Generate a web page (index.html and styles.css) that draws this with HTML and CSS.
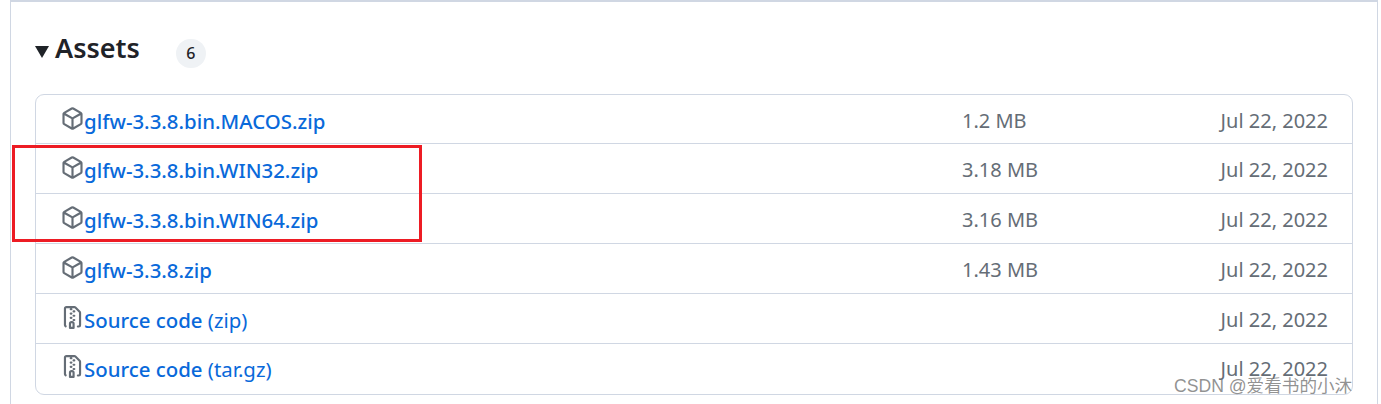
FILE: index.html
```html
<!DOCTYPE html>
<html lang="en">
<head>
    <meta charset="UTF-8">
    <title>Assets</title>
    <link rel="stylesheet" href="styles.css">
</head>
<body>
    <div class="release">
        <div class="assets-head">
            <span class="caret"></span>
            <h2 class="assets-title">Assets</h2>
            <span class="counter">6</span>
        </div>
        <ul class="assets">
            <li class="asset">
                <svg class="icon" viewBox="0 0 16 16"><path d="m8.878.392 5.25 3.045c.54.314.872.89.872 1.514v6.098a1.75 1.75 0 0 1-.872 1.514l-5.25 3.045a1.75 1.75 0 0 1-1.756 0l-5.25-3.045A1.75 1.75 0 0 1 1 11.049V4.951c0-.624.332-1.201.872-1.514L7.122.392a1.75 1.75 0 0 1 1.756 0ZM7.875 1.69l-4.63 2.685L8 7.133l4.755-2.758-4.63-2.685a.248.248 0 0 0-.25 0ZM2.5 5.677v5.372c0 .09.047.171.125.216l4.625 2.683V8.432Zm6.25 8.271 4.625-2.683a.25.25 0 0 0 .125-.216V5.677L8.75 8.432Z"/></svg>
                <a class="asset-name" href="#">glfw-3.3.8.bin.MACOS.zip</a>
                <span class="asset-size">1.2 MB</span>
                <span class="asset-date">Jul 22, 2022</span>
            </li>
            <li class="asset">
                <svg class="icon" viewBox="0 0 16 16"><path d="m8.878.392 5.25 3.045c.54.314.872.89.872 1.514v6.098a1.75 1.75 0 0 1-.872 1.514l-5.25 3.045a1.75 1.75 0 0 1-1.756 0l-5.25-3.045A1.75 1.75 0 0 1 1 11.049V4.951c0-.624.332-1.201.872-1.514L7.122.392a1.75 1.75 0 0 1 1.756 0ZM7.875 1.69l-4.63 2.685L8 7.133l4.755-2.758-4.63-2.685a.248.248 0 0 0-.25 0ZM2.5 5.677v5.372c0 .09.047.171.125.216l4.625 2.683V8.432Zm6.25 8.271 4.625-2.683a.25.25 0 0 0 .125-.216V5.677L8.75 8.432Z"/></svg>
                <a class="asset-name" href="#">glfw-3.3.8.bin.WIN32.zip</a>
                <span class="asset-size">3.18 MB</span>
                <span class="asset-date">Jul 22, 2022</span>
            </li>
            <li class="asset">
                <svg class="icon" viewBox="0 0 16 16"><path d="m8.878.392 5.25 3.045c.54.314.872.89.872 1.514v6.098a1.75 1.75 0 0 1-.872 1.514l-5.25 3.045a1.75 1.75 0 0 1-1.756 0l-5.25-3.045A1.75 1.75 0 0 1 1 11.049V4.951c0-.624.332-1.201.872-1.514L7.122.392a1.75 1.75 0 0 1 1.756 0ZM7.875 1.69l-4.63 2.685L8 7.133l4.755-2.758-4.63-2.685a.248.248 0 0 0-.25 0ZM2.5 5.677v5.372c0 .09.047.171.125.216l4.625 2.683V8.432Zm6.25 8.271 4.625-2.683a.25.25 0 0 0 .125-.216V5.677L8.75 8.432Z"/></svg>
                <a class="asset-name" href="#">glfw-3.3.8.bin.WIN64.zip</a>
                <span class="asset-size">3.16 MB</span>
                <span class="asset-date">Jul 22, 2022</span>
            </li>
            <li class="asset">
                <svg class="icon" viewBox="0 0 16 16"><path d="m8.878.392 5.25 3.045c.54.314.872.89.872 1.514v6.098a1.75 1.75 0 0 1-.872 1.514l-5.25 3.045a1.75 1.75 0 0 1-1.756 0l-5.25-3.045A1.75 1.75 0 0 1 1 11.049V4.951c0-.624.332-1.201.872-1.514L7.122.392a1.75 1.75 0 0 1 1.756 0ZM7.875 1.69l-4.63 2.685L8 7.133l4.755-2.758-4.63-2.685a.248.248 0 0 0-.25 0ZM2.5 5.677v5.372c0 .09.047.171.125.216l4.625 2.683V8.432Zm6.25 8.271 4.625-2.683a.25.25 0 0 0 .125-.216V5.677L8.75 8.432Z"/></svg>
                <a class="asset-name" href="#">glfw-3.3.8.zip</a>
                <span class="asset-size">1.43 MB</span>
                <span class="asset-date">Jul 22, 2022</span>
            </li>
            <li class="asset">
                <svg class="icon" viewBox="0 0 16 16"><path d="M3.5 1.75v11.5c0 .09.048.173.126.217a.75.75 0 0 1-.752 1.298A1.748 1.748 0 0 1 2 13.25V1.75C2 .784 2.784 0 3.75 0h5.586c.464 0 .909.185 1.237.513l2.914 2.914c.329.328.513.773.513 1.237v8.586A1.75 1.75 0 0 1 12.25 15h-.5a.75.75 0 0 1 0-1.5h.5a.25.25 0 0 0 .25-.25V4.664a.25.25 0 0 0-.073-.177L9.513 1.573a.25.25 0 0 0-.177-.073H7.25a.75.75 0 0 1 0 1.5h-.5a.75.75 0 0 1 0-1.5h-3a.25.25 0 0 0-.25.25Zm3.75 8.75h.5c.966 0 1.75.784 1.75 1.75v3a.75.75 0 0 1-.75.75h-2.5a.75.75 0 0 1-.75-.75v-3c0-.966.784-1.75 1.75-1.75ZM6 5.25a.75.75 0 0 1 .75-.75h.5a.75.75 0 0 1 0 1.5h-.5A.75.75 0 0 1 6 5.25Zm.75 2.25h.5a.75.75 0 0 1 0 1.5h-.5a.75.75 0 0 1 0-1.5ZM8 6.75A.75.75 0 0 1 8.75 6h.5a.75.75 0 0 1 0 1.5h-.5A.75.75 0 0 1 8 6.75ZM8.75 3h.5a.75.75 0 0 1 0 1.5h-.5a.75.75 0 0 1 0-1.5ZM8 9.75A.75.75 0 0 1 8.75 9h.5a.75.75 0 0 1 0 1.5h-.5A.75.75 0 0 1 8 9.75Zm-1 2.5v2.25h1v-2.25a.25.25 0 0 0-.25-.25h-.5a.25.25 0 0 0-.25.25Z"/></svg>
                <a class="asset-name" href="#">Source code <span class="asset-ext">(zip)</span></a>
                <span class="asset-size"></span>
                <span class="asset-date">Jul 22, 2022</span>
            </li>
            <li class="asset">
                <svg class="icon" viewBox="0 0 16 16"><path d="M3.5 1.75v11.5c0 .09.048.173.126.217a.75.75 0 0 1-.752 1.298A1.748 1.748 0 0 1 2 13.25V1.75C2 .784 2.784 0 3.75 0h5.586c.464 0 .909.185 1.237.513l2.914 2.914c.329.328.513.773.513 1.237v8.586A1.75 1.75 0 0 1 12.25 15h-.5a.75.75 0 0 1 0-1.5h.5a.25.25 0 0 0 .25-.25V4.664a.25.25 0 0 0-.073-.177L9.513 1.573a.25.25 0 0 0-.177-.073H7.25a.75.75 0 0 1 0 1.5h-.5a.75.75 0 0 1 0-1.5h-3a.25.25 0 0 0-.25.25Zm3.75 8.75h.5c.966 0 1.75.784 1.75 1.75v3a.75.75 0 0 1-.75.75h-2.5a.75.75 0 0 1-.75-.75v-3c0-.966.784-1.75 1.75-1.75ZM6 5.25a.75.75 0 0 1 .75-.75h.5a.75.75 0 0 1 0 1.5h-.5A.75.75 0 0 1 6 5.25Zm.75 2.25h.5a.75.75 0 0 1 0 1.5h-.5a.75.75 0 0 1 0-1.5ZM8 6.75A.75.75 0 0 1 8.75 6h.5a.75.75 0 0 1 0 1.5h-.5A.75.75 0 0 1 8 6.75ZM8.75 3h.5a.75.75 0 0 1 0 1.5h-.5a.75.75 0 0 1 0-1.5ZM8 9.75A.75.75 0 0 1 8.75 9h.5a.75.75 0 0 1 0 1.5h-.5A.75.75 0 0 1 8 9.75Zm-1 2.5v2.25h1v-2.25a.25.25 0 0 0-.25-.25h-.5a.25.25 0 0 0-.25.25Z"/></svg>
                <a class="asset-name" href="#">Source code <span class="asset-ext">(tar.gz)</span></a>
                <span class="asset-size"></span>
                <span class="asset-date">Jul 22, 2022</span>
            </li>
        </ul>
    </div>
    <div class="highlight"></div>
    <div class="watermark">CSDN @爱看书的小沐</div>
</body>
</html>
```

FILE: styles.css
```css
html, body {
    height: 100%;
}
body {
    margin: 0;
    background: #ffffff;
    font-family: "Noto Sans", sans-serif;
    color: #1f2328;
    overflow: hidden;
}
.release {
    height: 404px;
    box-sizing: border-box;
    margin: 0 3px 0 10px;
    padding: 0 24px;
    border: 1px solid #d0d7e3;
    border-top: 2px solid #d0d7e3;
    border-bottom: none;
}
.assets-head {
    display: flex;
    align-items: center;
    height: 92px;
}
.caret {
    width: 0;
    height: 0;
    margin-right: 6px;
    margin-top: 8px;
    border-style: solid;
    border-width: 12px 7px 0 7px;
    border-color: #1f2328 transparent transparent transparent;
}
.assets-title {
    margin: 0;
    margin-top: -2px;
    font-size: 27px;
    font-weight: 600;
    line-height: 1;
}
.counter {
    display: flex;
    justify-content: center;
    align-items: center;
    width: 30px;
    height: 29px;
    margin-left: 36px;
    margin-top: 10px;
    border-radius: 15px;
    background: #eff2f5;
    font-size: 16px;
    font-weight: 500;
}
.assets {
    list-style: none;
    margin: 0;
    padding: 0;
    border: 1px solid #d0d7e3;
    border-radius: 9px;
}
.asset {
    display: flex;
    align-items: center;
    box-sizing: border-box;
    height: 50px;
    padding: 2px 24px 0 25px;
    border-top: 1px solid #d0d7e3;
}
.asset:first-child {
    height: 48px;
    padding-top: 3px;
    border-top: none;
}
.asset:last-child {
    height: 51px;
    padding-bottom: 3px;
}
.icon {
    width: 23px;
    height: 23px;
    margin-top: -5px;
    fill: #656d76;
    flex: none;
}
.asset-name {
    flex: 1;
    color: #0969da;
    font-size: 20.4px;
    font-weight: 500;
    text-decoration: none;
}
.asset-ext {
    font-weight: 400;
}
.asset-size {
    width: 250px;
    color: #656d76;
    font-size: 20px;
}
.asset-date {
    width: 116px;
    text-align: right;
    color: #656d76;
    font-size: 20px;
}
.highlight {
    position: absolute;
    left: 12px;
    top: 145px;
    width: 404px;
    height: 91px;
    border: 3px solid #ed1c24;
}
.watermark {
    position: absolute;
    left: 1174px;
    top: 375px;
    color: rgba(110, 110, 110, 0.75);
    font-family: "Liberation Sans", "Noto Sans CJK SC", sans-serif;
    font-size: 17.6px;
    line-height: 22px;
    white-space: nowrap;
}
```
